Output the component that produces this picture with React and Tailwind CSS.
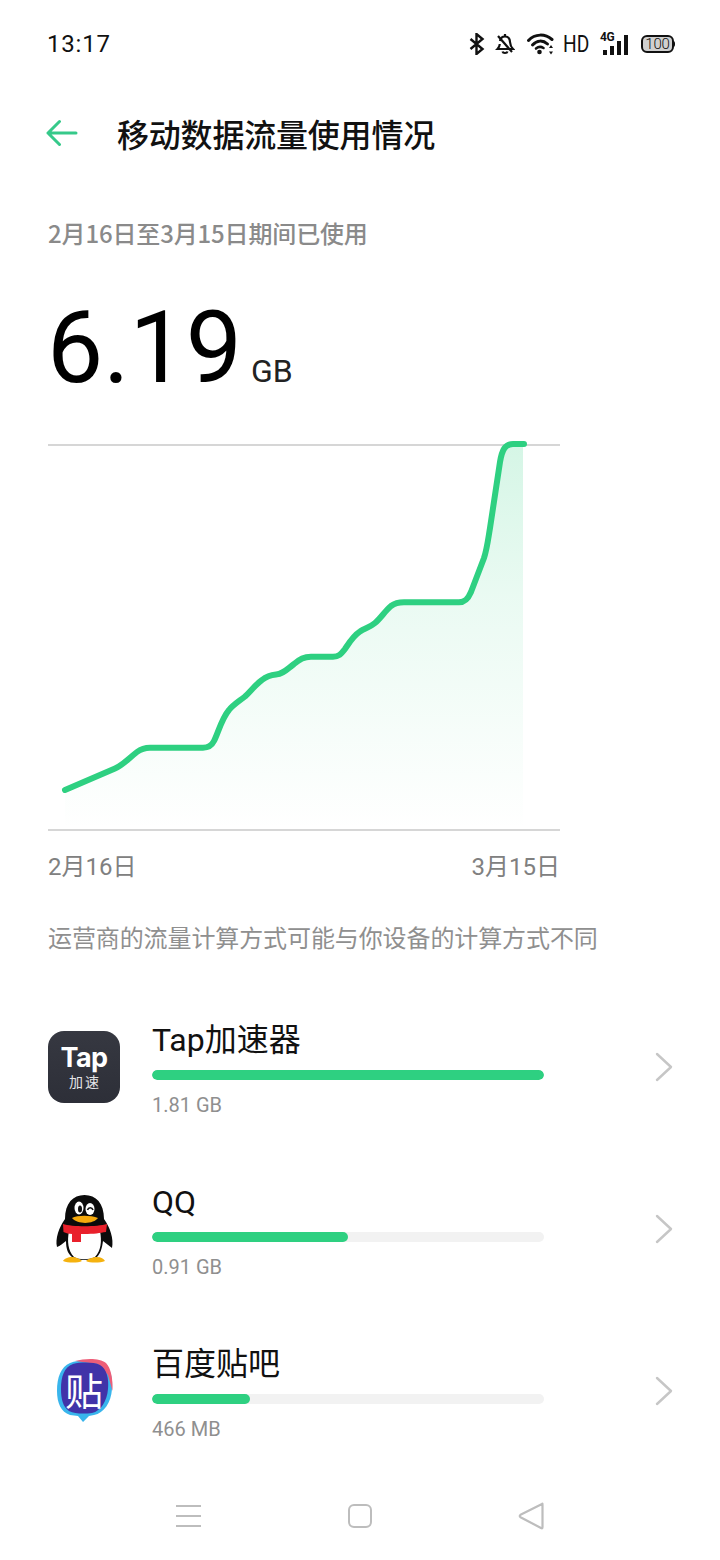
import React from "react";

const FONT = "font-['Roboto','Noto_Sans_CJK_SC',sans-serif]";
const CJK = "font-['Noto_Sans_CJK_SC',sans-serif]";

const LINE =
  "M65 790 L115 768.5 C123 765 128 759 137 752 C141 749 144 747.7 150 747.7 L203 747.7 C209 747.7 212 745 214 741 C218 733 222 718 229 710 C233 705 238 702 245 696.5 C251 691 256 684 262 680 C267 676 271 675 276 674.5 C283 674 286 670 294 664 C300 659 304 656.7 311 656.7 L333 656.7 C339 656.7 341 654 345 649 C349 643 353 636 360 631.5 C365 628 369 628 375 623 C381 618 385 611 391 606 C395 603 398 602.3 404 602.3 L459 602.3 C465 602.3 468 599 471 592 L484 558 C487 549 488 540 490 528 L500 462 C502 450 505 444 513 444 L524 444";
const AREA = LINE.replace(" L524 444", " L523 444 L523 830 L65 830 Z");

function StatusBar() {
  return (
    <div className="h-[87px] flex items-center justify-between pl-[47px] pr-[46px] pt-[1px] text-[#111]">
      <span className="text-[24px] leading-none font-['Roboto',sans-serif] tracking-[0.8px]">13:17</span>
      <div className="flex items-center">
        <svg width="16" height="22" viewBox="0 0 16 22" fill="none" stroke="#111" strokeWidth="2.4">
          <path d="M1.5 6 L13.5 16 L7.5 21 V1 L13.5 6 L1.5 16" />
        </svg>
        <svg className="ml-[10px]" width="20" height="22" viewBox="0 0 20 22" fill="none" stroke="#111" strokeWidth="2.2">
          <path d="M5 8 C5.5 5 7 3.5 10 3.5 C13 3.5 14.8 6 15 9 C15.2 12 16 14 18 16 H2.5 C4 14.5 4.7 12.5 4.8 11" />
          <path d="M10 1 V3.5 M7.5 18.5 C8 20.5 12 20.5 12.5 18.5" />
          <path d="M3 3 L17 19" />
        </svg>
        <svg className="ml-[12px]" width="28" height="22" viewBox="0 0 28 22" fill="none" stroke="#111" strokeLinecap="round">
          <path d="M1.5 7.5 C8 0.5 18 0.5 25 6.5" strokeWidth="3" />
          <path d="M5.5 12 C10 7 16 7 20.5 11" strokeWidth="3" />
          <path d="M9 15.5 C11.5 13.5 14 13.5 16.5 15" strokeWidth="2.6" />
          <circle cx="12.5" cy="19" r="2.3" fill="#111" stroke="none" />
          <path d="M24 12 L22 15 H26 Z M24 21.5 L22 18.5 H26 Z" fill="#111" stroke="none" />
        </svg>
        <span className="ml-[8px] w-[26px] text-[24px] leading-none font-['Roboto',sans-serif] font-normal scale-x-[0.8] origin-left">HD</span>
        <div className="ml-[11px] relative w-[30px] h-[22px]">
          <span className="absolute left-0 top-[-2px] text-[12px] leading-none font-['Roboto',sans-serif] font-bold tracking-[-0.3px]">4G</span>
          <div className="absolute left-0 right-0 bottom-0 h-[22px] flex items-end gap-[3px] pl-[3px]">
            <div className="w-[4px] h-[5px] bg-[#111]" />
            <div className="w-[4px] h-[9px] bg-[#111]" />
            <div className="w-[4px] h-[14px] bg-[#111]" />
            <div className="w-[4px] h-[20px] bg-[#111]" />
          </div>
        </div>
        <div className="ml-[11px] relative w-[33px] h-[18px] rounded-[6px] border-2 border-[#111] bg-[#d0d0d0] flex items-center justify-center">
          <span className="text-[15px] leading-none font-['Roboto',sans-serif] font-light tracking-[-0.2px]">100</span>
          <div className="absolute right-[-3px] top-[4px] w-[2px] h-[6px] bg-[#111] rounded-r" />
        </div>
      </div>
    </div>
  );
}

function Header() {
  return (
    <div className="h-[94px] flex items-center pl-[46px] pb-[3px]">
      <svg width="32" height="28" viewBox="0 0 32 28" fill="none" stroke="#36c98a" strokeWidth="3" strokeLinecap="round" strokeLinejoin="round">
        <path d="M2 14 H30 M13.5 2.5 L2 14 L13.5 25.5" />
      </svg>
      <h1 className={`ml-[39px] text-[32px] leading-none font-medium tracking-[-0.2px] text-[#111] ${CJK}`}>移动数据流量使用情况</h1>
    </div>
  );
}

function Chart() {
  return (
    <div className="mt-[39px] ml-[48px] w-[512px] h-[387px] border-y-2 border-[#d6d6d6] relative">
      <svg className="absolute left-[-48px] top-[-446px]" width="720" height="1000" viewBox="0 0 720 1000" fill="none">
        <defs>
          <linearGradient id="area" x1="0" y1="444" x2="0" y2="830" gradientUnits="userSpaceOnUse">
            <stop offset="0" stopColor="#2ed081" stopOpacity="0.2" />
            <stop offset="0.4" stopColor="#2ed081" stopOpacity="0.1" />
            <stop offset="1" stopColor="#2ed081" stopOpacity="0" />
          </linearGradient>
        </defs>
        <path d={AREA} fill="url(#area)" />
        <path d={LINE} stroke="#2ed081" strokeWidth="6" strokeLinecap="round" strokeLinejoin="round" />
      </svg>
    </div>
  );
}

function Chevron() {
  return (
    <svg width="18" height="30" viewBox="0 0 18 30" fill="none" stroke="#c6c6c6" strokeWidth="2.4" strokeLinecap="round" strokeLinejoin="round">
      <path d="M2 2 L16 15 L2 28" />
    </svg>
  );
}

function TapIcon() {
  return (
    <div className="w-[72px] h-[72px] rounded-[16px] bg-gradient-to-b from-[#363841] to-[#2d2f38] flex flex-col items-center justify-center text-white pb-[1px]">
      <span className="text-[27px] leading-[28px] font-bold font-['Inter',sans-serif] tracking-[-0.5px]">Tap</span>
      <span className={`text-[14px] leading-[18px] tracking-[2px] pl-[2px] ${CJK} text-[#e4e4e6]`}>加速</span>
    </div>
  );
}

function QQIcon() {
  return (
    <svg width="72" height="72" viewBox="0 0 72 72">
      <path d="M17 26 C17 10 25 2 36.5 2 C48 2 56 10 56 26 C62 34 66 46 64 55 C61 53 58 50 55 48 C54 56 52 61 49 64 C42 68 30 68 24 64 C20 61 18 56 18 48 C15 50 12 53 9 54 C7 46 11 34 17 26 Z" fill="#0b0b0b" />
      <path d="M21 38 C30 41 44 41 52 38 C54 48 53 58 47 64 C41 67 31 67 26 64 C20 58 19 48 21 38 Z" fill="#fff" />
      <path d="M24 64 C20 64 16 66 15 68 C20 70 30 70 34 68 C32 66 28 64 24 64 Z M49 64 C53 64 56 66 57 68 C52 70 42 70 38 68 C40 66 45 64 49 64 Z" fill="#f5b20f" />
      <path d="M15 31 C24 34 49 34 59 31 L58 39 C52 40 46 41 36 41 L33 41 L33 49 L24 49 L24 41 C21 41 18 40 15.5 39 Z" fill="#e9202b" />
      <ellipse cx="31" cy="15" rx="4.5" ry="6.5" fill="#fff" />
      <ellipse cx="32" cy="16" rx="2" ry="3.5" fill="#111" />
      <ellipse cx="42" cy="16" rx="4.5" ry="6" fill="#fff" />
      <path d="M39.5 17 C40.5 14 44 14 45 17" stroke="#111" strokeWidth="1.6" fill="none" />
      <path d="M24 25 C29 22 43 22 50 25 C46 31 30 32 24 25 Z" fill="#f5a90c" />
    </svg>
  );
}

function TiebaIcon() {
  return (
    <div className="relative w-[72px] h-[72px]">
      <svg className="absolute inset-0" width="72" height="72" viewBox="0 0 72 72">
        <path d="M22 8 C30 5 46 4 55 8 C62 12 65 22 64 34 C63 48 56 58 46 60 L41 61 L35 67 L30 61 L22 60 C13 57 9 48 9 36 C9 22 13 12 22 8 Z" fill="#39b5ec" />
        <path d="M27 6 C38 3 52 3 58 8 C63 13 65 24 64.5 36 L60 20 L50 9 Z" fill="#ee5e78" />
        <path d="M25 9 C33 7 46 7 52 10 C59 14 61 24 60 34 C59 46 53 56 44 58 C36 59 27 59 21 56 C15 52 13 44 13 34 C13 22 16 12 25 9 Z" fill="#4133a8" />
      </svg>
      <span className={`absolute inset-0 flex items-center justify-center pb-[5px] text-[38px] leading-none font-normal text-white ${CJK}`}>贴</span>
    </div>
  );
}

function Row({ icon, name, value, pct }) {
  return (
    <div className="h-[162px] flex items-center pl-[48px] pr-[47px]">
      <div className="w-[72px] h-[72px] shrink-0">{icon}</div>
      <div className="ml-[32px] w-[392px] pt-[2px]">
        <div className={`text-[32px] leading-[40px] text-[#111] ${FONT}`}>{name}</div>
        <div className="mt-[10px] h-[10px] rounded-full bg-[#f2f2f2] overflow-hidden">
          <div className="h-full rounded-full bg-[#2ed081]" style={{ width: `${pct}%` }} />
        </div>
        <div className={`mt-[13px] text-[20px] leading-[24px] text-[#8f8f8f] ${FONT}`}>{value}</div>
      </div>
      <div className="ml-auto"><Chevron /></div>
    </div>
  );
}

function NavBar() {
  return (
    <div className="absolute left-0 right-0 bottom-[29px] h-[30px] flex items-center">
      <div className="ml-[176px] w-[25px] flex flex-col gap-[8px]">
        <div className="h-[2px] bg-[#bdbdbd]" />
        <div className="h-[2px] bg-[#bdbdbd]" />
        <div className="h-[2px] bg-[#bdbdbd]" />
      </div>
      <div className="ml-[147px] w-[24px] h-[24px] rounded-[6px] border-2 border-[#bdbdbd]" />
      <svg className="ml-[146px]" width="26" height="28" viewBox="0 0 26 28" fill="none" stroke="#bdbdbd" strokeWidth="2.2" strokeLinejoin="round">
        <path d="M24 2 C24.5 1.5 24.5 1.5 24.5 3 V25 C24.5 26.5 24 26.5 23 26 L2.5 15.2 C1.5 14.5 1.5 13.5 2.5 12.8 Z" />
      </svg>
    </div>
  );
}

export default function App() {
  return (
    <div className={`relative w-[720px] h-[1560px] bg-white overflow-hidden ${FONT}`}>
      <StatusBar />
      <Header />
      <div className={`mt-[38px] pl-[48px] text-[24px] leading-[28px] font-medium tracking-[-0.15px] text-[#8a8a8a] ${CJK}`}>2月16日至3月15日期间已使用</div>
      <div className="mt-[44px] pl-[47px] h-[114px] flex items-baseline font-['Roboto',sans-serif]">
        <span className="text-[100px] leading-[114px] text-black">6.19</span>
        <span className="ml-[9px] text-[32px] leading-[40px] text-[#222]">GB</span>
      </div>
      <Chart />
      <div className={`mt-[20px] ml-[48px] w-[512px] flex justify-between text-[24px] leading-[32px] text-[#808080] ${FONT}`}>
        <span>2月16日</span>
        <span>3月15日</span>
      </div>
      <div className={`mt-[38px] pl-[48px] text-[24px] leading-[32px] tracking-[-0.1px] text-[#8f8f8f] ${CJK}`}>运营商的流量计算方式可能与你设备的计算方式不同</div>
      <div className="mt-[33px]">
        <Row icon={<TapIcon />} name="Tap加速器" value="1.81 GB" pct={100} />
        <Row icon={<QQIcon />} name="QQ" value="0.91 GB" pct={50} />
        <Row icon={<TiebaIcon />} name="百度贴吧" value="466 MB" pct={25} />
      </div>
      <NavBar />
    </div>
  );
}
